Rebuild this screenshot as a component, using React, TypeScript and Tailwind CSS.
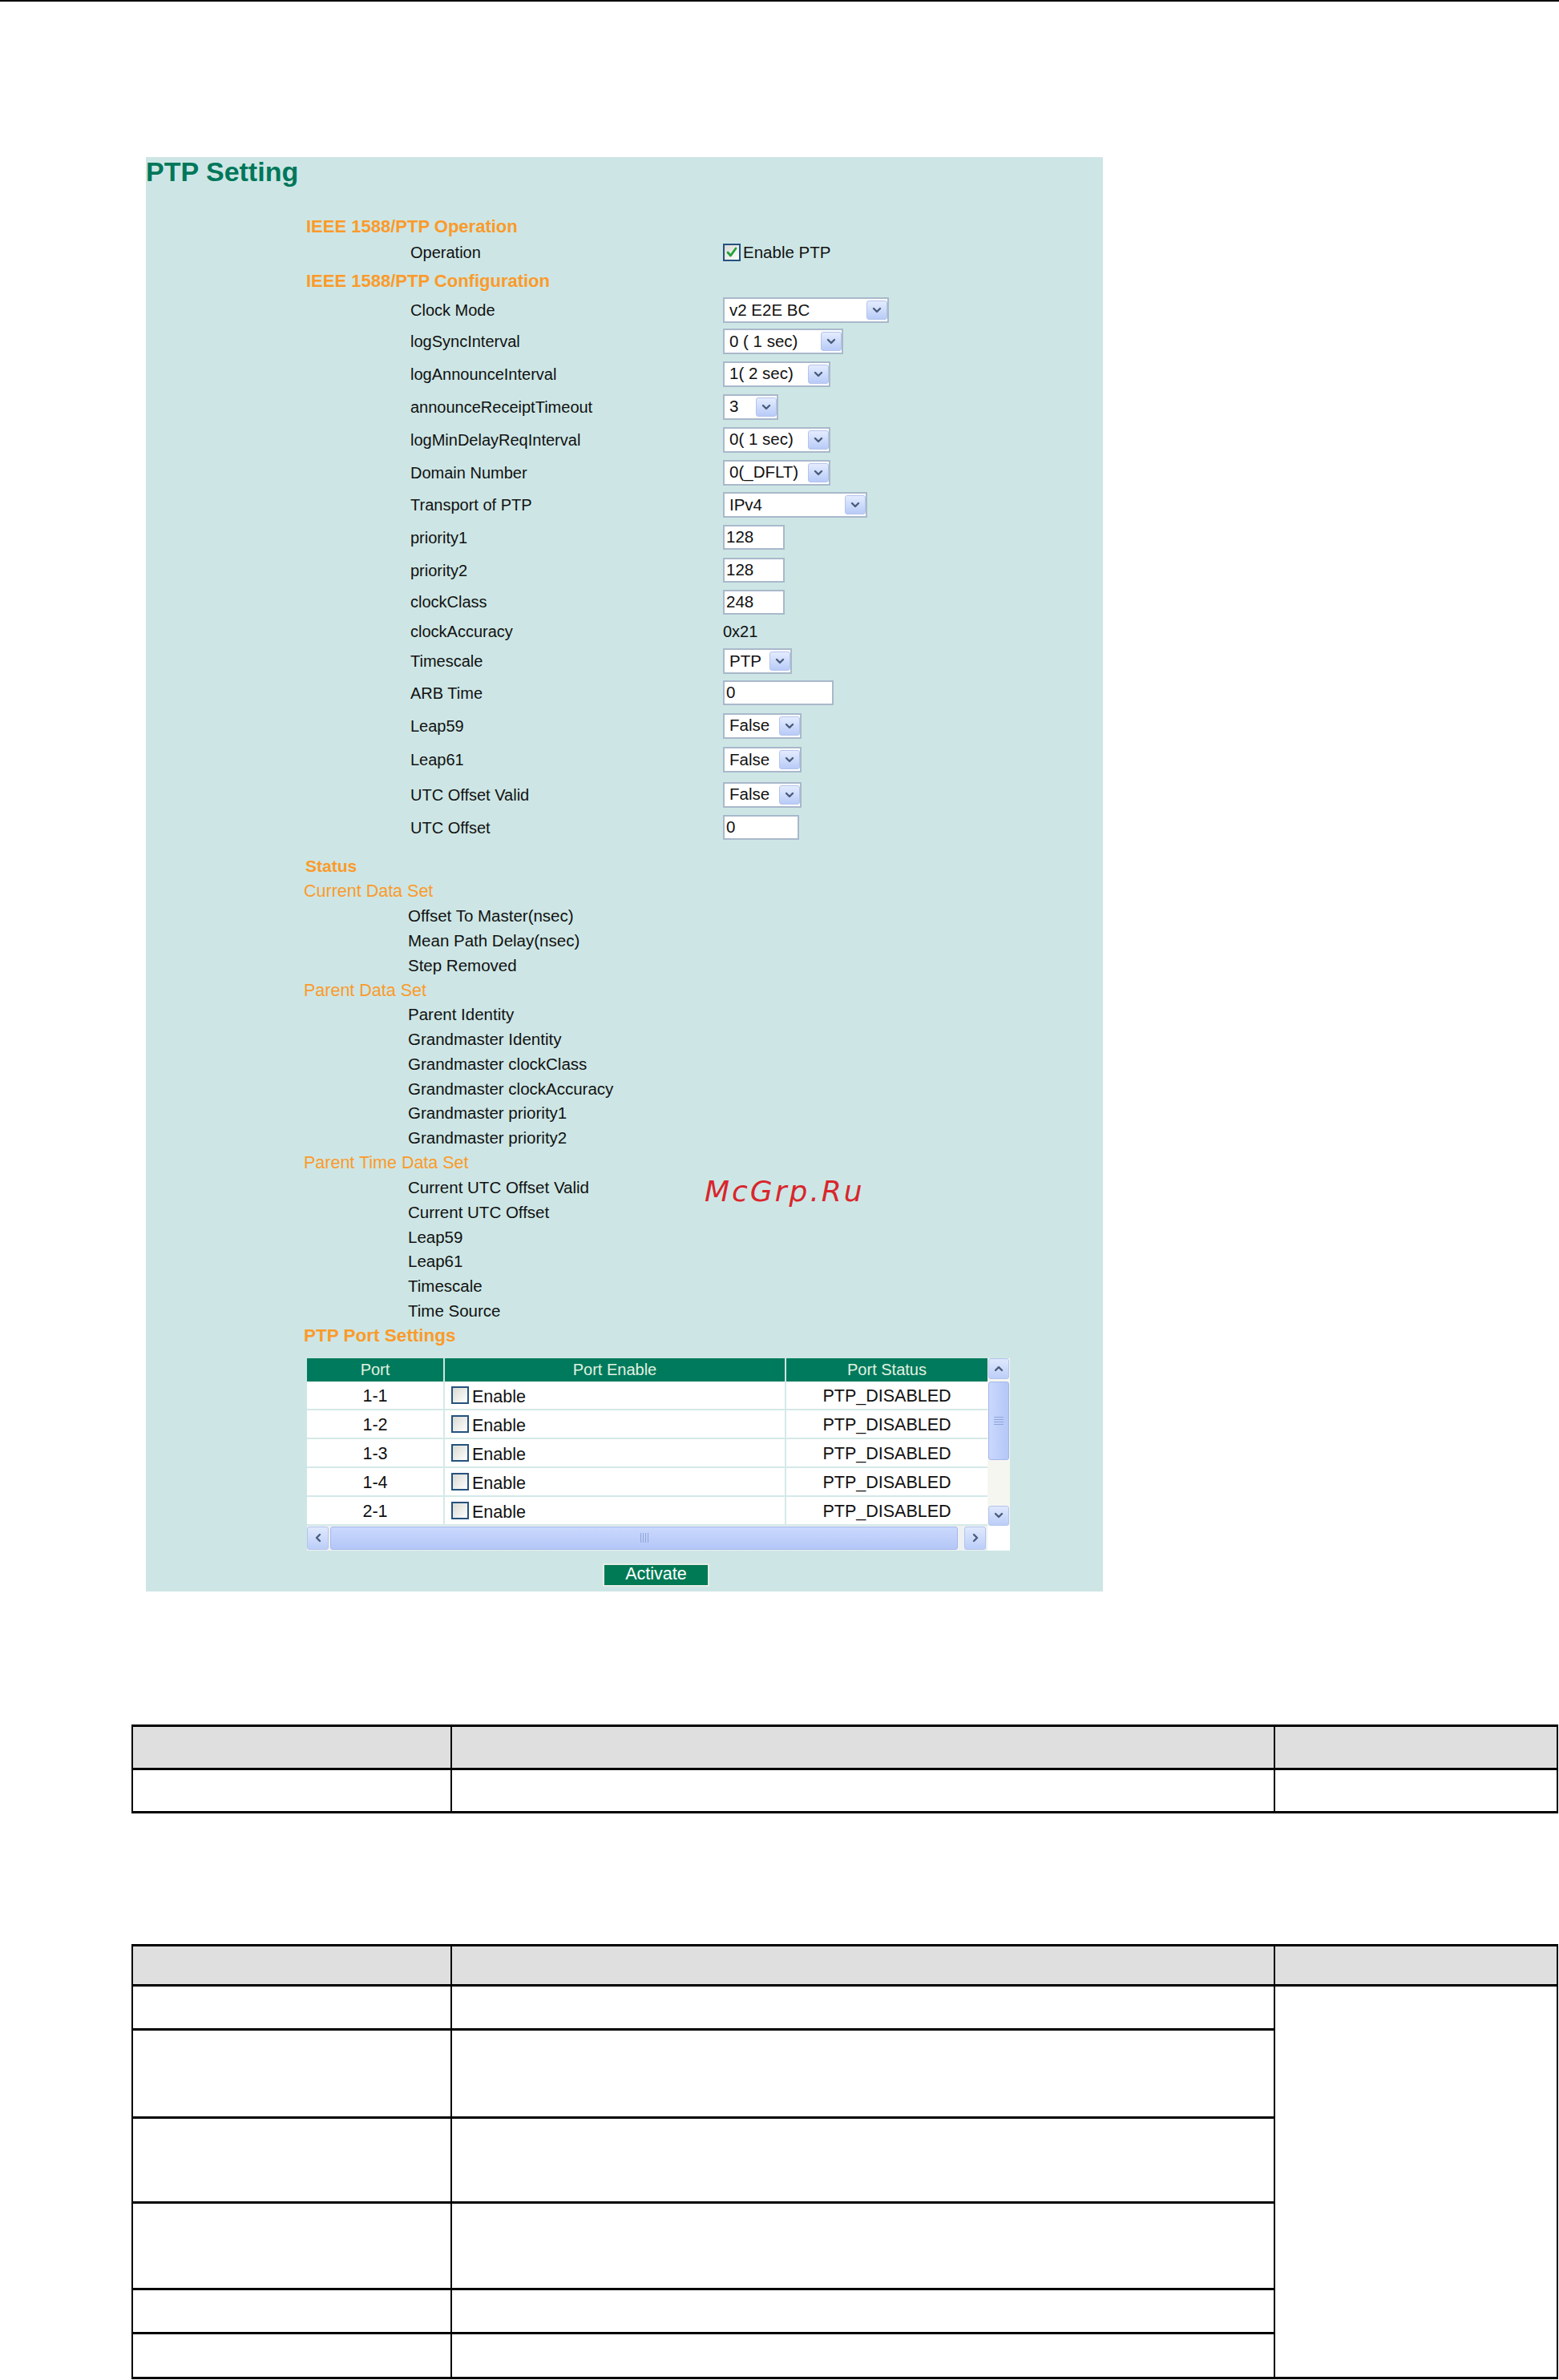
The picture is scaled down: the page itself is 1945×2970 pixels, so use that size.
import React from "react";

type Dir = "down" | "up" | "left" | "right";

function Chevron({ dir }: { dir: Dir }) {
  const pts = {
    down: "3,5 7,9 11,5",
    up: "3,9 7,5 11,9",
    left: "9,3 5,7 9,11",
    right: "5,3 9,7 5,11",
  }[dir];
  return (
    <svg width="14" height="14" viewBox="0 0 14 14">
      <polyline points={pts} fill="none" stroke="#4a5c7c" strokeWidth="2.4" strokeLinecap="round" strokeLinejoin="round" />
    </svg>
  );
}

function Select({ w, v }: { w: string; v: string }) {
  return (
    <div className={`${w} h-[32px] border-2 border-[#a9b8cb] bg-white flex items-center justify-between pl-[6px] pr-0 py-[2px]`}>
      <span className="text-[20.5px] leading-none text-[#111] whitespace-nowrap">{v}</span>
      <div className="w-[26px] h-[24px] rounded-[3px] border border-[#b3c4ec] bg-gradient-to-b from-[#e4ecfe] to-[#b8cbf7] flex items-center justify-center">
        <Chevron dir="down" />
      </div>
    </div>
  );
}

function Input({ w, v }: { w: string; v: string }) {
  return (
    <div className={`${w} h-[31px] border-2 border-[#a9b8cb] bg-white flex items-center pl-[2px]`}>
      <span className="text-[20.5px] leading-none text-[#111]">{v}</span>
    </div>
  );
}

function Check({ checked }: { checked?: boolean }) {
  return (
    <span className="w-[22px] h-[22px] border-2 border-[#24527e] bg-gradient-to-br from-[#d9d9d3] to-white flex items-center justify-center shrink-0">
      {checked && (
        <svg width="16" height="16" viewBox="0 0 16 16">
          <polyline points="3,8 6.5,12 13,3" fill="none" stroke="#22a23a" strokeWidth="2.8" strokeLinecap="round" strokeLinejoin="round" />
        </svg>
      )}
    </span>
  );
}

function ScrollBtn({ dir, cls }: { dir: Dir; cls: string }) {
  return (
    <div className={`${cls} rounded-[3px] border border-[#b3c4ec] bg-gradient-to-b from-[#dfe8fd] to-[#bccef8] flex items-center justify-center`}>
      <Chevron dir={dir} />
    </div>
  );
}

const cfg: [string, string, React.ReactNode][] = [
  ["h-[38px]", "Clock Mode", <Select w="w-[207px]" v="v2 E2E BC" />],
  ["h-[40px]", "logSyncInterval", <Select w="w-[150px]" v="0 ( 1 sec)" />],
  ["h-[41px]", "logAnnounceInterval", <Select w="w-[134px]" v="1( 2 sec)" />],
  ["h-[41px]", "announceReceiptTimeout", <Select w="w-[69px]" v="3" />],
  ["h-[41px]", "logMinDelayReqInterval", <Select w="w-[134px]" v="0( 1 sec)" />],
  ["h-[41px]", "Domain Number", <Select w="w-[134px]" v="0(_DFLT)" />],
  ["h-[40px]", "Transport of PTP", <Select w="w-[180px]" v="IPv4" />],
  ["h-[41px]", "priority1", <Input w="w-[77px]" v="128" />],
  ["h-[41px]", "priority2", <Input w="w-[77px]" v="128" />],
  ["h-[38px]", "clockClass", <Input w="w-[77px]" v="248" />],
  ["h-[36px]", "clockAccuracy", <span className="text-[20px] text-[#111]">0x21</span>],
  ["h-[38px]", "Timescale", <Select w="w-[86px]" v="PTP" />],
  ["h-[41px]", "ARB Time", <Input w="w-[138px]" v="0" />],
  ["h-[41px]", "Leap59", <Select w="w-[98px]" v="False" />],
  ["h-[44px]", "Leap61", <Select w="w-[98px]" v="False" />],
  ["h-[43px]", "UTC Offset Valid", <Select w="w-[98px]" v="False" />],
  ["h-[39px]", "UTC Offset", <Input w="w-[95px]" v="0" />],
];

type StatusItem = { t: string; kind: "head" | "label" };
const status: StatusItem[] = [
  { t: "Current Data Set", kind: "head" },
  { t: "Offset To Master(nsec)", kind: "label" },
  { t: "Mean Path Delay(nsec)", kind: "label" },
  { t: "Step Removed", kind: "label" },
  { t: "Parent Data Set", kind: "head" },
  { t: "Parent Identity", kind: "label" },
  { t: "Grandmaster Identity", kind: "label" },
  { t: "Grandmaster clockClass", kind: "label" },
  { t: "Grandmaster clockAccuracy", kind: "label" },
  { t: "Grandmaster priority1", kind: "label" },
  { t: "Grandmaster priority2", kind: "label" },
  { t: "Parent Time Data Set", kind: "head" },
  { t: "Current UTC Offset Valid", kind: "label" },
  { t: "Current UTC Offset", kind: "label" },
  { t: "Leap59", kind: "label" },
  { t: "Leap61", kind: "label" },
  { t: "Timescale", kind: "label" },
  { t: "Time Source", kind: "label" },
];

const ports = ["1-1", "1-2", "1-3", "1-4", "2-1"];

export default function App() {
  return (
    <div className="relative w-[1945px] h-[2970px] overflow-hidden bg-white font-['Liberation_Sans',Arial,Helvetica,sans-serif] text-[#111]">
      <div className="h-[2px] w-full bg-black" />

      {/* PTP Setting panel */}
      <div className="ml-[182px] mt-[194px] w-[1194px] h-[1790px] bg-[#cde6e5] flex flex-col">
        <div className="h-[36px] leading-[36px] text-[34px] font-bold text-[#00775a] whitespace-nowrap">PTP Setting</div>

        <div className="mt-[34px] h-[32px] flex items-center pl-[200px] text-[22px] font-bold text-[#fb9a2a] whitespace-nowrap">IEEE 1588/PTP Operation</div>
        <div className="h-[34px] flex items-center">
          <div className="w-[720px] pl-[330px] text-[20px]">Operation</div>
          <div className="flex items-center gap-[3px]">
            <Check checked />
            <span className="text-[20.5px]">Enable PTP</span>
          </div>
        </div>
        <div className="h-[36px] flex items-center pl-[200px] text-[22px] font-bold text-[#fb9a2a] whitespace-nowrap">IEEE 1588/PTP Configuration</div>

        {cfg.map(([h, label, ctrl]) => (
          <div key={label} className={`${h} flex items-center`}>
            <div className="w-[720px] pl-[330px] text-[20px] whitespace-nowrap">{label}</div>
            {ctrl}
          </div>
        ))}

        <div className="mt-[13px] h-[32px] flex items-center pl-[199px] text-[21px] font-bold text-[#fb9a2a]">Status</div>
        {status.map((s) =>
          s.kind === "head" ? (
            <div key={s.t} className="h-[30.83px] flex items-center pl-[197px] text-[21.5px] text-[#fb9a2a] whitespace-nowrap">{s.t}</div>
          ) : (
            <div key={s.t + "l"} className="h-[30.83px] flex items-center pl-[327px] text-[20.5px] whitespace-nowrap">{s.t}</div>
          )
        )}
        <div className="h-[30.83px] flex items-center pl-[197px] text-[22.5px] font-bold text-[#fb9a2a] whitespace-nowrap">PTP Port Settings</div>

        {/* Port table */}
        <div className="mt-[12px] ml-[201px] w-[877px]">
          <div className="flex">
            <div className="w-[849px]">
              <div className="flex h-[29px] bg-[#007a5c] text-[20px] text-[#e2f2e2]">
                <div className="w-[172px] flex items-center justify-center border-r-2 border-[#cde6e5]">Port</div>
                <div className="w-[426px] flex items-center justify-center border-r-2 border-[#cde6e5]">Port Enable</div>
                <div className="flex-1 flex items-center justify-center">Port Status</div>
              </div>
              {ports.map((p) => (
                <div key={p} className="flex h-[36px] bg-white border-b-2 border-[#d4e9e8] text-[21.5px]">
                  <div className="w-[172px] flex items-center justify-center border-r-2 border-[#d4e9e8] pt-[2px]">{p}</div>
                  <div className="w-[426px] flex items-center pl-[8px] gap-[4px] border-r-2 border-[#d4e9e8]">
                    <Check />
                    <span className="mt-[4px]">Enable</span>
                  </div>
                  <div className="flex-1 flex items-center justify-center pt-[2px]">PTP_DISABLED</div>
                </div>
              ))}
            </div>
            <div className="w-[28px] h-[209px] bg-[#f6f6f1] flex flex-col px-[1px]">
              <ScrollBtn dir="up" cls="h-[26px]" />
              <div className="mt-[3px] h-[98px] rounded-[3px] border border-[#a3b8ea] bg-gradient-to-r from-[#cad8fd] to-[#b4c7f7] flex flex-col items-center justify-center gap-[2px]">
                <div className="w-[12px] h-px bg-[#8fa5d8]" />
                <div className="w-[12px] h-px bg-[#8fa5d8]" />
                <div className="w-[12px] h-px bg-[#8fa5d8]" />
                <div className="w-[12px] h-px bg-[#8fa5d8]" />
              </div>
              <div className="flex-1" />
              <ScrollBtn dir="down" cls="h-[25px]" />
            </div>
          </div>
          <div className="flex h-[31px]">
            <div className="w-[849px] flex items-center bg-[#eef0f2] py-[1px]">
              <ScrollBtn dir="left" cls="w-[27px] h-[29px]" />
              <div className="ml-[2px] w-[783px] h-[29px] rounded-[3px] border border-[#a3b8ea] bg-gradient-to-b from-[#cad8fd] to-[#b4c7f7] flex items-center justify-center gap-[2px]">
                <div className="w-px h-[12px] bg-[#8fa5d8]" />
                <div className="w-px h-[12px] bg-[#8fa5d8]" />
                <div className="w-px h-[12px] bg-[#8fa5d8]" />
                <div className="w-px h-[12px] bg-[#8fa5d8]" />
              </div>
              <div className="flex-1" />
              <ScrollBtn dir="right" cls="w-[27px] h-[29px]" />
              <div className="w-[2px]" />
            </div>
            <div className="w-[28px] bg-white" />
          </div>
          <div className="mt-[16px] ml-[369px] w-[133px] h-[29px] border-2 border-[#e6ece6] bg-[#007a55] flex items-center justify-center">
            <span className="text-[21.5px] leading-none text-white">Activate</span>
          </div>
        </div>
      </div>

      {/* Table 1 */}
      <div className="mt-[166px] ml-[164px] w-[1780px] border-t-[3px] border-b-[3px] border-x-2 border-black">
        <div className="flex h-[54px] bg-[#dfdfdf] border-b-[3px] border-black">
          <div className="w-[398px] border-r-2 border-black" />
          <div className="w-[1027px] border-r-2 border-black" />
          <div className="flex-1" />
        </div>
        <div className="flex h-[51px]">
          <div className="w-[398px] border-r-2 border-black" />
          <div className="w-[1027px] border-r-2 border-black" />
          <div className="flex-1" />
        </div>
      </div>

      {/* Table 2 */}
      <div className="mt-[163px] ml-[164px] w-[1780px] border-t-[3px] border-b-[3px] border-x-2 border-black">
        <div className="flex h-[50px] bg-[#dfdfdf] border-b-[3px] border-black">
          <div className="w-[398px] border-r-2 border-black" />
          <div className="w-[1027px] border-r-2 border-black" />
          <div className="flex-1" />
        </div>
        <div className="flex">
          <div className="w-[1425px] flex flex-col">
            {[
              "h-[55px] border-b-[3px]",
              "h-[110px] border-b-[3px]",
              "h-[106px] border-b-[3px]",
              "h-[108px] border-b-[3px]",
              "h-[55px] border-b-[3px]",
              "h-[53px]",
            ].map((c, i) => (
              <div key={i} className={`${c} flex border-black`}>
                <div className="w-[398px] border-r-2 border-black" />
                <div className="w-[1027px] border-r-2 border-black" />
              </div>
            ))}
          </div>
          <div className="flex-1" />
        </div>
      </div>

      {/* watermark */}
      <div className="absolute left-[879px] top-[1469px] text-[36px] leading-[36px] italic tracking-[3px] text-[#d9262c] font-['DejaVu_Sans',sans-serif]">
        McGrp.Ru
      </div>
    </div>
  );
}
